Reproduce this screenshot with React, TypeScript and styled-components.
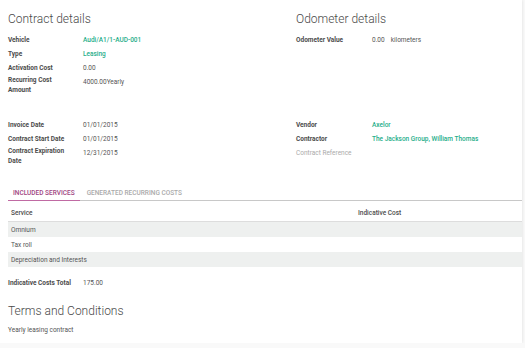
import React from "react";
import styled, { createGlobalStyle } from "styled-components";

const Global = createGlobalStyle`
  html, body {
    margin: 0;
    padding: 0;
    background: #f9f9f9;
    font-family: Roboto, "Noto Sans", sans-serif;
  }
`;

const Sheet = styled.div`
  width: 522px;
  height: 343px;
  box-sizing: border-box;
  background: #fff;
  box-shadow: 0 0 3px rgba(0, 0, 0, 0.12);
  padding: 10px 0 0 8px;
  color: #555;
`;

const Columns = styled.div`
  display: grid;
  grid-template-columns: 288px 1fr;
`;

const Title = styled.h2`
  margin: 0 0 7px;
  font-size: 12px;
  font-weight: 300;
  color: #4a4a4a;
  line-height: 18px;
`;

const FieldGroup = styled.div<{ $gap?: number }>`
  display: flex;
  flex-direction: column;
  gap: 4px;
  margin-bottom: ${(p) => p.$gap ?? 0}px;
`;

const Field = styled.div<{ $labelWidth?: number }>`
  display: grid;
  grid-template-columns: ${(p) => p.$labelWidth ?? 75}px 1fr;
  font-size: 6.5px;
  line-height: 10px;
`;

const Label = styled.div<{ $muted?: boolean; $wrap?: boolean }>`
  font-weight: ${(p) => (p.$muted ? 400 : 700)};
  color: ${(p) => (p.$muted ? "#aaa" : "#4c4c4c")};
  padding-right: 12px;
  margin-top: ${(p) => (p.$wrap ? -2 : 0)}px;
`;

const Value = styled.div<{ $link?: boolean }>`
  color: ${(p) => (p.$link ? "#1fae8a" : "#555")};
  font-weight: ${(p) => (p.$link ? 500 : 400)};
`;

const Unit = styled.span`
  margin-left: 6px;
`;

const Tabs = styled.div`
  display: flex;
  gap: 2px;
  border-bottom: 1px solid #c8c8c8;
  margin-top: 22px;
`;

const Tab = styled.div<{ $active?: boolean }>`
  font-size: 6.5px;
  font-weight: 500;
  line-height: 10px;
  padding: 0 5px 2px;
  margin-bottom: -1px;
  color: ${(p) => (p.$active ? "#a0447f" : "#aaa")};
  border-bottom: 1px solid ${(p) => (p.$active ? "#c06aa3" : "transparent")};
  text-transform: uppercase;
`;

const Table = styled.table`
  width: 100%;
  border-collapse: collapse;
  margin-top: 6px;
  font-size: 6.5px;
`;

const HeadCell = styled.th<{ $width?: string }>`
  text-align: left;
  font-weight: 500;
  color: #4c4c4c;
  padding: 3px 3px 4px;
  line-height: 7px;
  border-bottom: 1px solid #ddd;
  width: ${(p) => p.$width ?? "auto"};
`;

const Row = styled.tr`
  &:nth-child(odd) {
    background: #eef0ef;
  }
`;

const Cell = styled.td`
  padding: 0 3px;
  height: 15px;
  color: #555;
`;

const Total = styled(Field)`
  margin-top: 11px;
`;

const TermsTitle = styled(Title)`
  margin: 14px 0 5px;
`;

const Note = styled.div`
  font-size: 6.5px;
  line-height: 10px;
  color: #555;
`;

export default function App() {
  return (
    <>
      <Global />
      <Sheet>
        <Columns>
          <div>
            <Title>Contract details</Title>
            <FieldGroup $gap={25}>
              <Field>
                <Label>Vehicle</Label>
                <Value $link>Audi/A1/1-AUD-001</Value>
              </Field>
              <Field>
                <Label>Type</Label>
                <Value $link>Leasing</Value>
              </Field>
              <Field>
                <Label>Activation Cost</Label>
                <Value>0.00</Value>
              </Field>
              <Field>
                <Label $wrap>Recurring Cost Amount</Label>
                <Value>4000.00Yearly</Value>
              </Field>
            </FieldGroup>
            <FieldGroup>
              <Field>
                <Label>Invoice Date</Label>
                <Value>01/01/2015</Value>
              </Field>
              <Field>
                <Label>Contract Start Date</Label>
                <Value>01/01/2015</Value>
              </Field>
              <Field>
                <Label $wrap>Contract Expiration Date</Label>
                <Value>12/31/2015</Value>
              </Field>
            </FieldGroup>
          </div>
          <div>
            <Title>Odometer details</Title>
            <FieldGroup $gap={75}>
              <Field $labelWidth={76}>
                <Label>Odometer Value</Label>
                <Value>
                  0.00<Unit>kilometers</Unit>
                </Value>
              </Field>
            </FieldGroup>
            <FieldGroup>
              <Field $labelWidth={76}>
                <Label>Vendor</Label>
                <Value $link>Axelor</Value>
              </Field>
              <Field $labelWidth={76}>
                <Label>Contractor</Label>
                <Value $link>The Jackson Group, William Thomas</Value>
              </Field>
              <Field $labelWidth={76}>
                <Label $muted>Contract Reference</Label>
                <Value />
              </Field>
            </FieldGroup>
          </div>
        </Columns>
        <Tabs>
          <Tab $active>Included Services</Tab>
          <Tab>Generated Recurring Costs</Tab>
        </Tabs>
        <Table>
          <thead>
            <tr>
              <HeadCell $width="341px">Service</HeadCell>
              <HeadCell>Indicative Cost</HeadCell>
            </tr>
          </thead>
          <tbody>
            <Row>
              <Cell>Omnium</Cell>
              <Cell />
            </Row>
            <Row>
              <Cell>Tax roll</Cell>
              <Cell />
            </Row>
            <Row>
              <Cell>Depreciation and Interests</Cell>
              <Cell />
            </Row>
          </tbody>
        </Table>
        <Total>
          <Label>Indicative Costs Total</Label>
          <Value>175.00</Value>
        </Total>
        <TermsTitle>Terms and Conditions</TermsTitle>
        <Note>Yearly leasing contract</Note>
      </Sheet>
    </>
  );
}
